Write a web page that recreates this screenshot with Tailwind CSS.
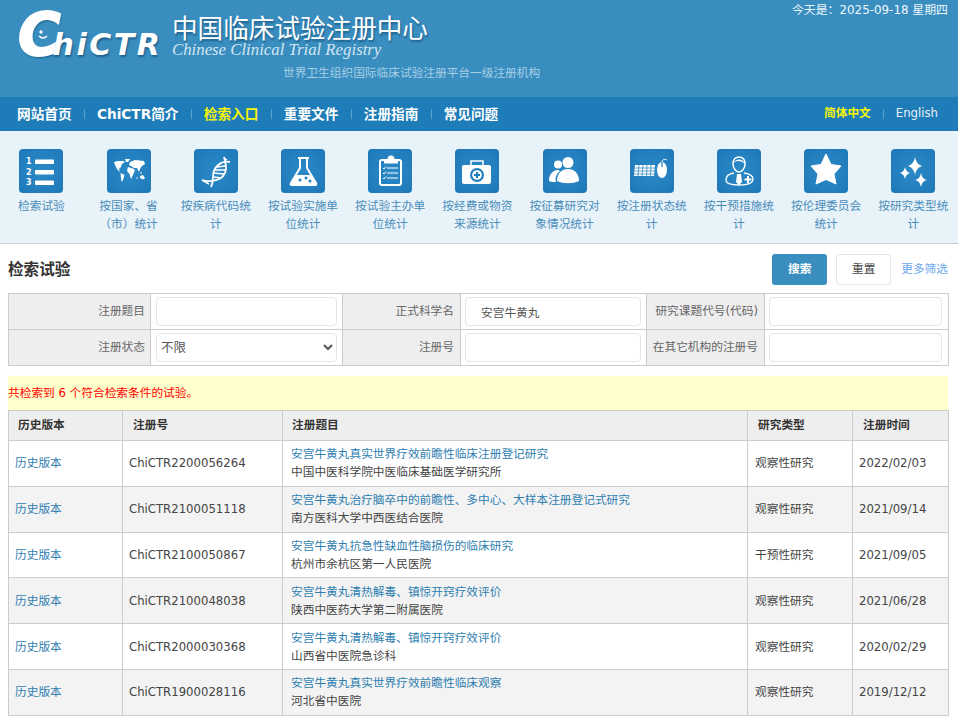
<!DOCTYPE html>
<html lang="zh-CN">
<head>
    <meta charset="UTF-8">
    <meta name="viewport" content="width=device-width, initial-scale=1.0">
    <title>检索试验 - 中国临床试验注册中心</title>
    <script src="https://cdn.jsdelivr.net/npm/@tailwindcss/browser@4"></script>
</head>
<body class="bg-white text-[11.7px] text-[#444] font-['DejaVu_Sans','Noto_Sans_CJK_SC',sans-serif]">
<div class="w-[958px]">

    <!-- 顶部 -->
    <header class="bg-[#3a8ebf] h-[97px] flex justify-between">
        <div class="pl-[18px] pt-[10px]">
            <div class="flex">
                <div class="relative flex items-baseline w-[154px] h-[50px] italic font-bold text-white [text-shadow:1px_2px_2px_#1d5f8c] font-['DejaVu_Sans',sans-serif]">
                    <span class="text-[58px] leading-[50px] tracking-[-8px] [-webkit-text-stroke:2px_white]">C</span>
                    <span class="text-[30px] leading-[28px] tracking-[2.5px]">hiCTR</span>
                    <svg viewBox="0 0 12 12" class="absolute left-[19px] top-[19px] w-[12px] h-[12px]" fill="none" stroke="#fff">
                        <circle cx="4" cy="3" r="1.200" fill="#fff"/>
                        <path d="M2 7 Q6 11 10 7" stroke-width="1.500"/>
                    </svg>
                </div>
                <div class="pt-[2px]">
                    <div class="text-[25.6px] leading-[30px] text-white whitespace-nowrap [text-shadow:1px_2px_2px_#1d5f8c] font-['Noto_Sans_CJK_SC',sans-serif]">中国临床试验注册中心</div>
                    <div class="text-[16.8px] leading-[16px] italic text-[#d3e6f2] whitespace-nowrap font-['Liberation_Serif',serif]">Chinese Clinical Trial Registry</div>
                </div>
            </div>
            <div class="ml-[265px] mt-[5px] text-[#a6cfe6] leading-[16px] whitespace-nowrap">世界卫生组织国际临床试验注册平台一级注册机构</div>
        </div>
        <div class="pr-[10px] pt-[2px] text-[11.9px] text-[#eef6fb] leading-[16px]">今天是：2025-09-18 星期四</div>
    </header>

    <!-- 导航 -->
    <nav class="bg-[#1e7cb8] h-[34px] flex items-center justify-between pl-[17px] pr-[20px]">
        <div class="flex items-center gap-[12.2px] text-[13.65px] font-bold text-white">
            <a href="#">网站首页</a><span class="w-px h-[10px] bg-[#5b9fcb]"></span>
            <a href="#">ChiCTR简介</a><span class="w-px h-[10px] bg-[#5b9fcb]"></span>
            <a href="#" class="text-[#f6f60a]">检索入口</a><span class="w-px h-[10px] bg-[#5b9fcb]"></span>
            <a href="#">重要文件</a><span class="w-px h-[10px] bg-[#5b9fcb]"></span>
            <a href="#">注册指南</a><span class="w-px h-[10px] bg-[#5b9fcb]"></span>
            <a href="#">常见问题</a>
        </div>
        <div class="flex items-center gap-3">
            <a href="#" class="font-bold text-[#f6f60a]">简体中文</a><span class="w-px h-[10px] bg-[#5b9fcb]"></span>
            <a href="#" class="text-[#e6f1f8]">English</a>
        </div>
    </nav>

    <!-- 统计入口 -->
    <div class="bg-[#e8f2f9] h-[113px] border-b border-[#ccc] pt-[18px] overflow-hidden">
        <div class="-ml-[2.2px] grid grid-cols-[repeat(11,87.2px)] text-center text-[#4a8dba] leading-[18px]">
            <a href="#" class="flex flex-col items-center px-[6px]">
                <svg viewBox="0 0 44 44" class="w-[44px] h-[44px] rounded-[4px] bg-radial from-[#2c8ac7] to-[#1d78b8] mb-[4px]">
                    <text x="7" y="15" font-size="8" font-weight="700" fill="#fff">1</text>
                    <text x="7" y="25.500" font-size="8" font-weight="700" fill="#fff">2</text>
                    <text x="7" y="36" font-size="8" font-weight="700" fill="#fff">3</text>
                    <rect x="16" y="10.500" width="19" height="4.500" rx="1" fill="#fff"/>
                    <rect x="16" y="21" width="19" height="4.500" rx="1" fill="#fff"/>
                    <rect x="16" y="31.500" width="19" height="4.500" rx="1" fill="#fff"/>
                </svg>
                <span>检索试验</span>
            </a>
            <a href="#" class="flex flex-col items-center px-[6px]">
                <svg viewBox="0 0 44 44" class="w-[44px] h-[44px] rounded-[4px] bg-radial from-[#2c8ac7] to-[#1d78b8] mb-[4px]" fill="#fff">
                    <path d="M7 13 L11 12 L16 12 L18 13 L15 15 L14 18 L12 20 L13 23 L10 20 L8 16Z"/>
                    <path d="M18 10 L23 10 L21 13 L19 13Z"/>
                    <path d="M13.500 24 L17.500 26 L16 31 L14.500 33 L14 29Z"/>
                    <path d="M23 13 L28 11 L37 12 L38 15 L35 17 L33 20 L32 23 L30 19 L27 19 L24 17 L22 16Z"/>
                    <path d="M21 18 L26 19.500 L28 21 L26 26 L24 30 L22.500 25 L20 22Z"/>
                    <path d="M33 27 L36 26 L38 29 L36 30.500 L33 29Z"/>
                    <circle cx="34" cy="24" r=".8"/>
                    <circle cx="30" cy="29" r=".7"/>
                </svg>
                <span>按国家、省（市）统计</span>
            </a>
            <a href="#" class="flex flex-col items-center px-[6px]">
                <svg viewBox="0 0 44 44" class="w-[44px] h-[44px] rounded-[4px] bg-radial from-[#2c8ac7] to-[#1d78b8] mb-[4px]" fill="none" stroke="#fff">
                    <path d="M36 13 C27 11 19 18 19 28 C19 32 18 36 17 38" stroke-width="1.800"/>
                    <path d="M30 8 C33 18 33 24 27 29 C22 32 14 33 8 31" stroke-width="1.800"/>
                    <path d="M23 18 L31 17 M21 21 L31 21 M20 24 L30 25 M20 28 L27 29" stroke-width="1.300"/>
                    <path d="M30 9 L33 11 M8 31 L15 35" stroke-width="1.500"/>
                </svg>
                <span>按疾病代码统计</span>
            </a>
            <a href="#" class="flex flex-col items-center px-[6px]">
                <svg viewBox="0 0 44 44" class="w-[44px] h-[44px] rounded-[4px] bg-radial from-[#2c8ac7] to-[#1d78b8] mb-[4px]">
                    <path d="M17 9 H28 M19 9 V19 L10 34 Q9 36 11 36 H34 Q36 36 35 34 L26 19 V9" fill="none" stroke="#fff" stroke-width="2"/>
                    <path d="M15 26 H30 L35 36 H10Z" fill="#fff"/>
                    <circle cx="19" cy="31" r="1.500" fill="#2080bf"/><circle cx="25" cy="29" r="1.500" fill="#2080bf"/><circle cx="29" cy="32" r="1.500" fill="#2080bf"/>
                </svg>
                <span>按试验实施单位统计</span>
            </a>
            <a href="#" class="flex flex-col items-center px-[6px]">
                <svg viewBox="0 0 44 44" class="w-[44px] h-[44px] rounded-[4px] bg-radial from-[#2c8ac7] to-[#1d78b8] mb-[4px]">
                    <rect x="12" y="11" width="21" height="25" rx="2" fill="none" stroke="#fff" stroke-width="2"/>
                    <circle cx="23" cy="10" r="3.500" fill="#fff"/><rect x="16" y="11" width="14" height="3.500" fill="#fff"/>
                    <path d="M19 19 H30 M19 24 H30 M19 29 H30" stroke="#fff" stroke-width="1.200"/>
                    <path d="M15 19 L16 20 L18 17.500 M15 24 L16 25 L18 22.500 M15 29 L16 30 L18 27.500" fill="none" stroke="#fff"/>
                </svg>
                <span>按试验主办单位统计</span>
            </a>
            <a href="#" class="flex flex-col items-center px-[6px]">
                <svg viewBox="0 0 44 44" class="w-[44px] h-[44px] rounded-[4px] bg-radial from-[#2c8ac7] to-[#1d78b8] mb-[4px]">
                    <path d="M16 17 V12 H28 V17" fill="none" stroke="#fff" stroke-width="1.500"/>
                    <rect x="7" y="16" width="29" height="19" rx="2" fill="#fff"/>
                    <circle cx="22" cy="26" r="7" fill="#2080bf"/><circle cx="22" cy="26" r="4.800" fill="#fff"/>
                    <path d="M22 23 V29 M19 26 H25" stroke="#2080bf" stroke-width="2"/>
                </svg>
                <span>按经费或物资来源统计</span>
            </a>
            <a href="#" class="flex flex-col items-center px-[6px]">
                <svg viewBox="0 0 44 44" class="w-[44px] h-[44px] rounded-[4px] bg-radial from-[#2c8ac7] to-[#1d78b8] mb-[4px]" fill="#fff">
                    <circle cx="15" cy="15.500" r="4"/>
                    <path d="M6 32 C6 25 10 21 15 21 L17 22 C13 25 12 29 13 33 C10 33 8 33 6 32Z"/>
                    <circle cx="25" cy="13.500" r="5.500"/>
                    <path d="M14 32 C14 24 19 20 25 20 C32 20 36 25 36 32 C30 35 20 35 14 32Z"/>
                </svg>
                <span>按征募研究对象情况统计</span>
            </a>
            <a href="#" class="flex flex-col items-center px-[6px]">
                <svg viewBox="0 0 44 44" class="w-[44px] h-[44px] rounded-[4px] bg-radial from-[#2c8ac7] to-[#1d78b8] mb-[4px]">
                    <path d="M5 16 H25 L24 27 H4Z" fill="#fff"/>
                    <path d="M5 19 H25 M4.500 22 H25 M4 25 H24 M9 16 L8 27 M13 16 L12 27 M17 16 L16.500 27 M21 16 L20.500 27" stroke="#2080bf" stroke-width=".7"/>
                    <ellipse cx="32" cy="21" rx="5" ry="8" fill="#fff"/>
                    <path d="M32 13 V18" stroke="#2080bf" stroke-width="1.200"/>
                    <path d="M32 13 C32 10 35 10 37 11" fill="none" stroke="#fff"/>
                </svg>
                <span>按注册状态统计</span>
            </a>
            <a href="#" class="flex flex-col items-center px-[6px]">
                <svg viewBox="0 0 44 44" class="w-[44px] h-[44px] rounded-[4px] bg-radial from-[#2c8ac7] to-[#1d78b8] mb-[4px]">
                    <path d="M16 15 C16 10 19 8 22 8 C26 8 28 11 28 15 C28 19 25 23 22 23 C19 23 16 19 16 15Z" fill="none" stroke="#fff" stroke-width="1.500"/>
                    <path d="M16 15 C18 11 24 11 28 15 C26 9 18 9 16 15Z" fill="#fff"/>
                    <path d="M17 24 C10 25 9 29 9 31 C9 34 14 36 22 36 C30 36 36 34 36 30 C36 27 33 25 27 24" fill="none" stroke="#fff" stroke-width="1.300"/>
                    <path d="M20 25 H24 L25 33 L22 36 L19 33Z" fill="#fff"/>
                    <path d="M31 27 V34 M27.500 30.500 H34.500" stroke="#fff" stroke-width="2"/>
                </svg>
                <span>按干预措施统计</span>
            </a>
            <a href="#" class="flex flex-col items-center px-[6px]">
                <svg viewBox="0 0 44 44" class="w-[44px] h-[44px] rounded-[4px] bg-radial from-[#2c8ac7] to-[#1d78b8] mb-[4px]">
                    <path d="M22 5 L27 15.500 L37 17 L30 25 L32 35 L22 30.500 L12 35 L14 25 L7 17 L17 15.500Z" fill="#fff" stroke="#fff" stroke-linejoin="round"/>
                </svg>
                <span>按伦理委员会统计</span>
            </a>
            <a href="#" class="flex flex-col items-center px-[6px]">
                <svg viewBox="0 0 44 44" class="w-[44px] h-[44px] rounded-[4px] bg-radial from-[#2c8ac7] to-[#1d78b8] mb-[4px]" fill="#fff">
                    <path d="M24 8 Q25 15 31 17 Q25 19 24 26 Q23 19 17 17 Q23 15 24 8Z"/>
                    <path d="M14 18 Q15 23 19 24 Q15 25 14 30 Q13 25 9 24 Q13 23 14 18Z"/>
                    <path d="M30 24 Q31 30 36 31 Q31 32 30 38 Q29 32 24 31 Q29 30 30 24Z"/>
                </svg>
                <span>按研究类型统计</span>
            </a>
        </div>
    </div>

    <main class="px-[8px]">
        <!-- 标题与按钮 -->
        <div class="h-[49px] w-[940px] flex items-center justify-between pt-[2px]">
            <h2 class="pt-[3px] text-[15.6px] font-bold text-[#333]">检索试验</h2>
            <div class="flex items-center">
                <button class="w-[55px] h-[31px] rounded-[3px] bg-[#3a8ebf] text-white font-bold">搜索</button>
                <button class="w-[55px] h-[31px] ml-[9px] rounded-[3px] border border-[#e4e4ec] bg-white">重置</button>
                <a href="#" class="ml-[10px] text-[#6aa9ec]">更多筛选</a>
            </div>
        </div>

        <!-- 检索条件 -->
        <table class="w-[940px] table-fixed border-collapse border border-[#bbb]">
            <colgroup><col class="w-[142px]"><col class="w-[192px]"><col class="w-[118px]"><col class="w-[186px]"><col class="w-[118px]"><col class="w-[184px]"></colgroup>
            <tbody>
                <tr class="h-[36px]">
                    <td class="bg-[#eee] border border-[#ccc] text-right pr-[5px] text-[#666]">注册题目</td>
                    <td class="border border-[#ccc] px-[5px]"><input class="w-full h-[29px] rounded-[4px] border border-[#e4e4ee] px-[15px]"></td>
                    <td class="bg-[#eee] border border-[#ccc] text-right pr-[6px] text-[#666]">正式科学名</td>
                    <td class="border border-[#ccc] pl-[4px] pr-[5px]"><input value="安宫牛黄丸" class="w-full h-[29px] rounded-[4px] border border-[#e4e4ee] px-[15px] text-[#555]"></td>
                    <td class="bg-[#eee] border border-[#ccc] text-right pr-[6px] text-[#666] whitespace-nowrap">研究课题代号(代码)</td>
                    <td class="border border-[#ccc] pl-[4px] pr-[6px]"><input class="w-full h-[29px] rounded-[4px] border border-[#e4e4ee] px-[15px]"></td>
                </tr>
                <tr class="h-[36px]">
                    <td class="bg-[#eee] border border-[#ccc] text-right pr-[5px] text-[#666]">注册状态</td>
                    <td class="border border-[#ccc] px-[5px]"><select class="w-full h-[29px] rounded-[4px] border border-[#e4e4ee] px-0 text-[12.5px] text-[#555] bg-white"><option>不限</option></select></td>
                    <td class="bg-[#eee] border border-[#ccc] text-right pr-[6px] text-[#666]">注册号</td>
                    <td class="border border-[#ccc] pl-[4px] pr-[5px]"><input class="w-full h-[29px] rounded-[4px] border border-[#e4e4ee] px-[15px]"></td>
                    <td class="bg-[#eee] border border-[#ccc] text-right pr-[6px] text-[#666] whitespace-nowrap">在其它机构的注册号</td>
                    <td class="border border-[#ccc] pl-[4px] pr-[6px]"><input class="w-full h-[29px] rounded-[4px] border border-[#e4e4ee] px-[15px]"></td>
                </tr>
            </tbody>
        </table>

        <!-- 检索结果 -->
        <div class="mt-[10px] w-[940px] h-[34px] bg-[#ffffcc] flex items-center pt-[1px] text-[#f00]">共检索到 6 个符合检索条件的试验。</div>
        <table class="w-[940px] table-fixed border-collapse border border-[#ccc]">
            <colgroup><col class="w-[114px]"><col class="w-[160px]"><col class="w-[465px]"><col class="w-[105px]"><col class="w-[96px]"></colgroup>
            <thead>
                <tr class="h-[30px] bg-[#eee] font-bold text-[#333]">
                    <th class="border border-[#ccc] text-left pl-[9px]">历史版本</th>
                    <th class="border border-[#ccc] text-left pl-[10px]">注册号</th>
                    <th class="border border-[#ccc] text-left pl-[9px]">注册题目</th>
                    <th class="border border-[#ccc] text-left pl-[10px]">研究类型</th>
                    <th class="border border-[#ccc] text-left pl-[10px]">注册时间</th>
                </tr>
            </thead>
            <tbody class="leading-[18px]">
                <tr class="h-[45.8px]">
                    <td class="border border-[#ccc] pl-[6px]"><a href="#" class="text-[#2e7eb0]">历史版本</a></td>
                    <td class="border border-[#ccc] pl-[6px]">ChiCTR2200056264</td>
                    <td class="border border-[#ccc] pl-[8px]"><a href="#" class="block text-[#2e7eb0]">安宫牛黄丸真实世界疗效前瞻性临床注册登记研究</a>中国中医科学院中医临床基础医学研究所</td>
                    <td class="border border-[#ccc] pl-[7px]">观察性研究</td>
                    <td class="border border-[#ccc] pl-[6px]">2022/02/03</td>
                </tr>
                <tr class="h-[45.8px] bg-[#f3f3f3]">
                    <td class="border border-[#ccc] pl-[6px]"><a href="#" class="text-[#2e7eb0]">历史版本</a></td>
                    <td class="border border-[#ccc] pl-[6px]">ChiCTR2100051118</td>
                    <td class="border border-[#ccc] pl-[8px]"><a href="#" class="block text-[#2e7eb0]">安宫牛黄丸治疗脑卒中的前瞻性、多中心、大样本注册登记式研究</a>南方医科大学中西医结合医院</td>
                    <td class="border border-[#ccc] pl-[7px]">观察性研究</td>
                    <td class="border border-[#ccc] pl-[6px]">2021/09/14</td>
                </tr>
                <tr class="h-[45.8px]">
                    <td class="border border-[#ccc] pl-[6px]"><a href="#" class="text-[#2e7eb0]">历史版本</a></td>
                    <td class="border border-[#ccc] pl-[6px]">ChiCTR2100050867</td>
                    <td class="border border-[#ccc] pl-[8px]"><a href="#" class="block text-[#2e7eb0]">安宫牛黄丸抗急性缺血性脑损伤的临床研究</a>杭州市余杭区第一人民医院</td>
                    <td class="border border-[#ccc] pl-[7px]">干预性研究</td>
                    <td class="border border-[#ccc] pl-[6px]">2021/09/05</td>
                </tr>
                <tr class="h-[45.8px] bg-[#f3f3f3]">
                    <td class="border border-[#ccc] pl-[6px]"><a href="#" class="text-[#2e7eb0]">历史版本</a></td>
                    <td class="border border-[#ccc] pl-[6px]">ChiCTR2100048038</td>
                    <td class="border border-[#ccc] pl-[8px]"><a href="#" class="block text-[#2e7eb0]">安宫牛黄丸清热解毒、镇惊开窍疗效评价</a>陕西中医药大学第二附属医院</td>
                    <td class="border border-[#ccc] pl-[7px]">观察性研究</td>
                    <td class="border border-[#ccc] pl-[6px]">2021/06/28</td>
                </tr>
                <tr class="h-[45.8px]">
                    <td class="border border-[#ccc] pl-[6px]"><a href="#" class="text-[#2e7eb0]">历史版本</a></td>
                    <td class="border border-[#ccc] pl-[6px]">ChiCTR2000030368</td>
                    <td class="border border-[#ccc] pl-[8px]"><a href="#" class="block text-[#2e7eb0]">安宫牛黄丸清热解毒、镇惊开窍疗效评价</a>山西省中医院急诊科</td>
                    <td class="border border-[#ccc] pl-[7px]">观察性研究</td>
                    <td class="border border-[#ccc] pl-[6px]">2020/02/29</td>
                </tr>
                <tr class="h-[45.8px] bg-[#f3f3f3]">
                    <td class="border border-[#ccc] pl-[6px]"><a href="#" class="text-[#2e7eb0]">历史版本</a></td>
                    <td class="border border-[#ccc] pl-[6px]">ChiCTR1900028116</td>
                    <td class="border border-[#ccc] pl-[8px]"><a href="#" class="block text-[#2e7eb0]">安宫牛黄丸真实世界疗效前瞻性临床观察</a>河北省中医院</td>
                    <td class="border border-[#ccc] pl-[7px]">观察性研究</td>
                    <td class="border border-[#ccc] pl-[6px]">2019/12/12</td>
                </tr>
            </tbody>
        </table>
    </main>
</div>
</body>
</html>
